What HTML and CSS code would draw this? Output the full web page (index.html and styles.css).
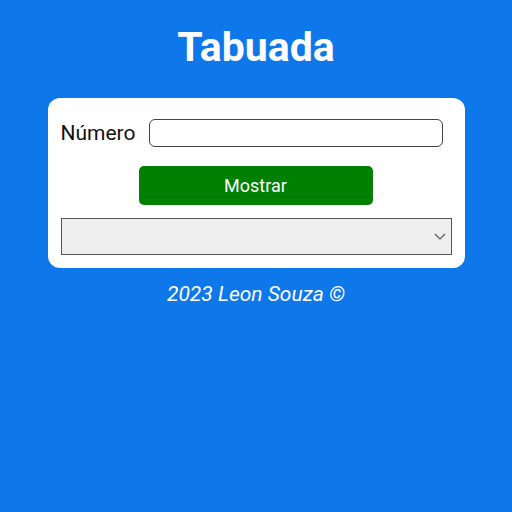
FILE: index.html
```html
<!DOCTYPE html>
<html lang="pt-BR">
<head>
<meta charset="utf-8">
<title>Tabuada</title>
<link rel="stylesheet" href="styles.css">
</head>
<body>
<h1 class="title">Tabuada</h1>
<main class="card">
  <div class="row">
    <label class="label" for="num">Número</label>
    <input class="input" id="num" type="number">
  </div>
  <div class="actions">
    <button class="btn" type="button">Mostrar</button>
  </div>
  <div class="select-wrap">
    <select class="list" size="1"></select>
    <svg class="chevron" width="12" height="7" viewBox="0 0 12 7" aria-hidden="true"><path d="M1 1 L6 6 L11 1" fill="none" stroke="#555" stroke-width="1.2"/></svg>
  </div>
</main>
<footer class="footer">2023 Leon Souza ©</footer>
</body>
</html>
```
FILE: styles.css
```css
html, body {
  margin: 0;
  padding: 0;
}
body {
  background: #0e77ea;
  font-family: Roboto, "Liberation Sans", sans-serif;
  height: 512px;
  overflow: hidden;
}
.title {
  margin: 0;
  padding-top: 23px;
  height: 74px;
  box-sizing: border-box;
  text-align: center;
  color: #fff;
  font-size: 41px;
  font-weight: 700;
  line-height: 48px;
}
.card {
  width: 417px;
  box-sizing: border-box;
  margin: 24px auto 0;
  background: #fff;
  border-radius: 12px;
  padding: 21px 13px 13px;
}
.row {
  display: flex;
  align-items: center;
}
.label {
  font-size: 21px;
  color: #111;
  width: 88px;
}
.input {
  width: 294px;
  height: 28px;
  box-sizing: border-box;
  border: 1px solid #444;
  border-radius: 6px;
  padding: 0 6px;
  margin: 0;
}
.actions {
  display: flex;
  justify-content: center;
  padding: 19px 0 13px;
}
.btn {
  width: 234px;
  height: 39px;
  margin-left: -1px;
  background: #008000;
  color: #fff;
  border: none;
  border-radius: 5px;
  font-family: Roboto, "Liberation Sans", sans-serif;
  font-size: 18px;
}
.select-wrap {
  position: relative;
  width: 391px;
}
.list {
  display: block;
  width: 391px;
  height: 37px;
  box-sizing: border-box;
  background: #eee;
  border: 1px solid #555;
  border-radius: 0;
  margin: 0;
  appearance: none;
  -webkit-appearance: none;
}
.chevron {
  position: absolute;
  right: 6px;
  top: 15px;
  pointer-events: none;
}
.footer {
  text-align: center;
  color: #fff;
  font-style: italic;
  font-size: 21px;
  margin-top: 14px;
  line-height: 24px;
}
```
